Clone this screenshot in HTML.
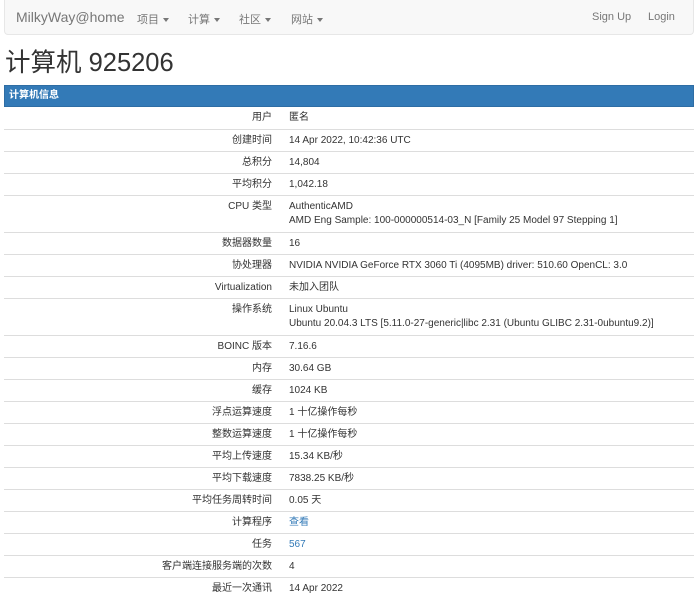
<!DOCTYPE html>
<html><head><meta charset="utf-8"><style>
*{box-sizing:border-box;margin:0;padding:0}
body{width:700px;height:613px;overflow:hidden;background:#fff;font-family:"Liberation Sans","Noto Sans CJK SC",sans-serif;color:#333;font-size:10px;position:relative}
.nav{position:absolute;left:4px;top:0;width:690px;height:35px;background:#f8f8f8;border:1px solid #e7e7e7;border-top:none;border-radius:0 0 4px 4px;color:#777}
.nav span{position:absolute;top:11px;font-size:11px}
.nav .brand{font-size:14px;top:9px;left:11px}
.caret{display:inline-block;border-top:4px solid #777;border-left:3px solid transparent;border-right:3px solid transparent;vertical-align:middle;margin-left:4px}
h1{position:absolute;left:5px;top:47px;font-size:25.5px;font-weight:normal;color:#333;line-height:32px}
.bar{position:absolute;left:4px;top:85px;width:690px;height:22px;background:#337ab7;border:1px solid #2e6da4;color:#fff;font-weight:bold;font-size:10px;line-height:12px;padding:4px 4px}
table{position:absolute;left:4px;top:107px;width:690px;border-collapse:collapse}
td{border-top:1px solid #ddd;height:22px;line-height:14px;padding:4px 8px 3px;vertical-align:top;white-space:nowrap}
tr:first-child td{border-top:none}
td.l{width:276px;text-align:right;padding-right:8px}
td.v{padding-left:9px}
tr.two td{height:37px}
a{color:#337ab7;text-decoration:none}
</style></head><body>
<div class="nav">
<span class="brand">MilkyWay@home</span>
<span style="left:132px">项目<i class="caret"></i></span>
<span style="left:183px">计算<i class="caret"></i></span>
<span style="left:234px">社区<i class="caret"></i></span>
<span style="left:286px">网站<i class="caret"></i></span>
<span style="left:587px">Sign Up</span>
<span style="left:643px">Login</span>
</div>
<h1>计算机 925206</h1>
<div class="bar">计算机信息</div>
<table>
<tr><td class="l">用户</td><td class="v">匿名</td></tr>
<tr><td class="l">创建时间</td><td class="v">14 Apr 2022, 10:42:36 UTC</td></tr>
<tr><td class="l">总积分</td><td class="v">14,804</td></tr>
<tr><td class="l">平均积分</td><td class="v">1,042.18</td></tr>
<tr class="two"><td class="l">CPU 类型</td><td class="v">AuthenticAMD<br>AMD Eng Sample: 100-000000514-03_N [Family 25 Model 97 Stepping 1]</td></tr>
<tr><td class="l">数据器数量</td><td class="v">16</td></tr>
<tr><td class="l">协处理器</td><td class="v">NVIDIA NVIDIA GeForce RTX 3060 Ti (4095MB) driver: 510.60 OpenCL: 3.0</td></tr>
<tr><td class="l">Virtualization</td><td class="v">未加入团队</td></tr>
<tr class="two"><td class="l">操作系统</td><td class="v">Linux Ubuntu<br>Ubuntu 20.04.3 LTS [5.11.0-27-generic|libc 2.31 (Ubuntu GLIBC 2.31-0ubuntu9.2)]</td></tr>
<tr><td class="l">BOINC 版本</td><td class="v">7.16.6</td></tr>
<tr><td class="l">内存</td><td class="v">30.64 GB</td></tr>
<tr><td class="l">缓存</td><td class="v">1024 KB</td></tr>
<tr><td class="l">浮点运算速度</td><td class="v">1 十亿操作每秒</td></tr>
<tr><td class="l">整数运算速度</td><td class="v">1 十亿操作每秒</td></tr>
<tr><td class="l">平均上传速度</td><td class="v">15.34 KB/秒</td></tr>
<tr><td class="l">平均下载速度</td><td class="v">7838.25 KB/秒</td></tr>
<tr><td class="l">平均任务周转时间</td><td class="v">0.05 天</td></tr>
<tr><td class="l">计算程序</td><td class="v"><a>查看</a></td></tr>
<tr><td class="l">任务</td><td class="v"><a>567</a></td></tr>
<tr><td class="l">客户端连接服务端的次数</td><td class="v">4</td></tr>
<tr><td class="l">最近一次通讯</td><td class="v">14 Apr 2022</td></tr>
</table>
</body></html>
